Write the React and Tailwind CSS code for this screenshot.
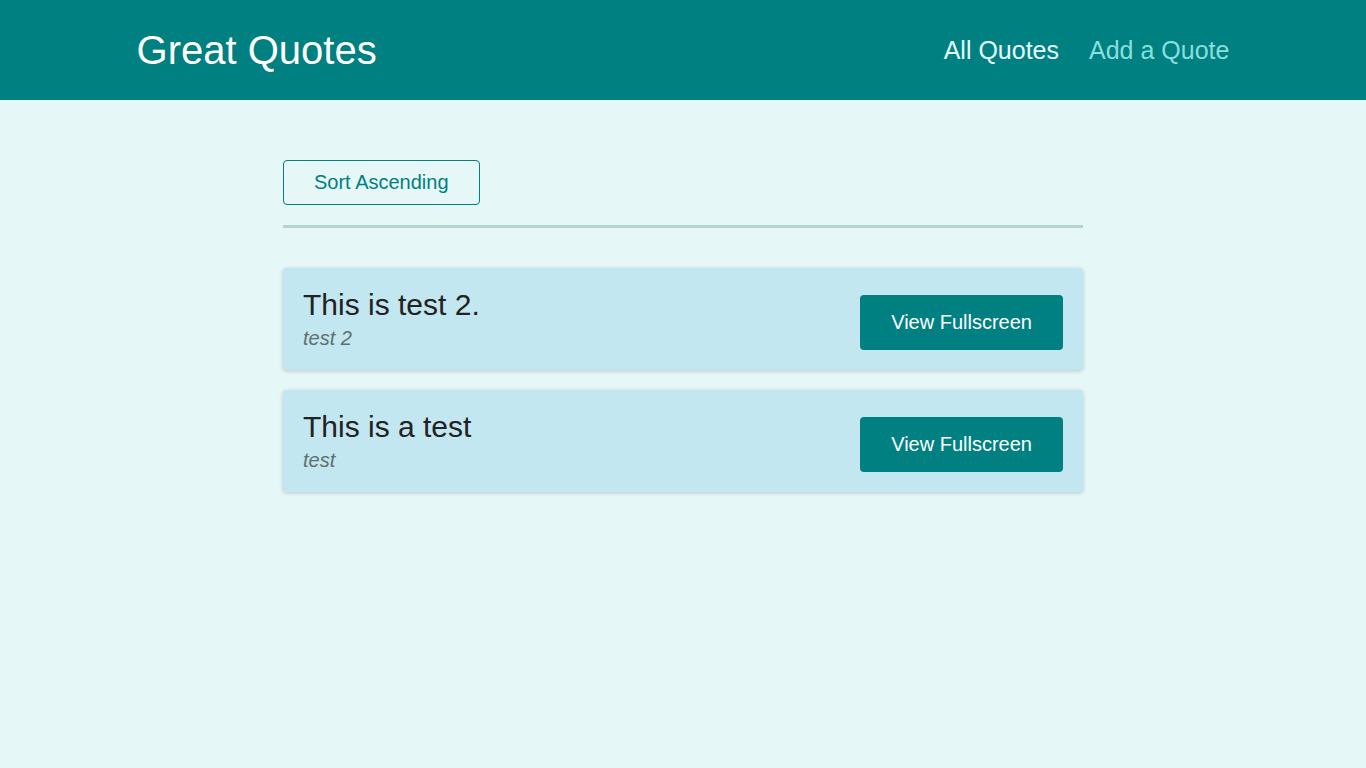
import React from "react";

const quotes = [
  { text: "This is test 2.", author: "test 2" },
  { text: "This is a test", author: "test" },
];

export default function App() {
  return (
    <div
      className="min-h-[768px] bg-[#e6f7f7]"
      style={{ fontFamily: '"Liberation Sans", Arial, sans-serif' }}
    >
      <header className="h-[100px] bg-[#008080] px-[10%] flex items-center justify-between">
        <div className="text-[40px] leading-none text-white">Great Quotes</div>
        <nav className="flex items-center gap-[30px] text-[25px] leading-none">
          <a className="text-[#e6fcfc]">All Quotes</a>
          <a className="text-[#88dfdf]">Add a Quote</a>
        </nav>
      </header>
      <main className="w-[800px] mx-auto pt-[60px]">
        <div className="pb-[20px] border-b-[3px] border-[#b4d3d3]">
          <button className="border border-[#008080] rounded-[4px] px-[30px] py-[10px] text-[20px] leading-[23px] text-[#008080] bg-transparent">
            Sort Ascending
          </button>
        </div>
        <ul className="mt-[40px] flex flex-col gap-[20px]">
          {quotes.map((q) => (
            <li
              key={q.text}
              className="bg-[#c2e7f0] rounded-[4px] shadow-[0_1px_4px_rgba(0,0,0,0.2)] p-[20px] flex items-end justify-between"
            >
              <figure>
                <blockquote className="text-[30px] leading-[34px] text-[#222]">
                  {q.text}
                </blockquote>
                <figcaption className="mt-[5px] text-[20px] leading-[23px] italic text-[#5f6f6f]">
                  {q.author}
                </figcaption>
              </figure>
              <button className="bg-[#008080] text-white rounded-[4px] px-[31px] py-[16px] text-[20px] leading-[23px]">
                View Fullscreen
              </button>
            </li>
          ))}
        </ul>
      </main>
    </div>
  );
}
